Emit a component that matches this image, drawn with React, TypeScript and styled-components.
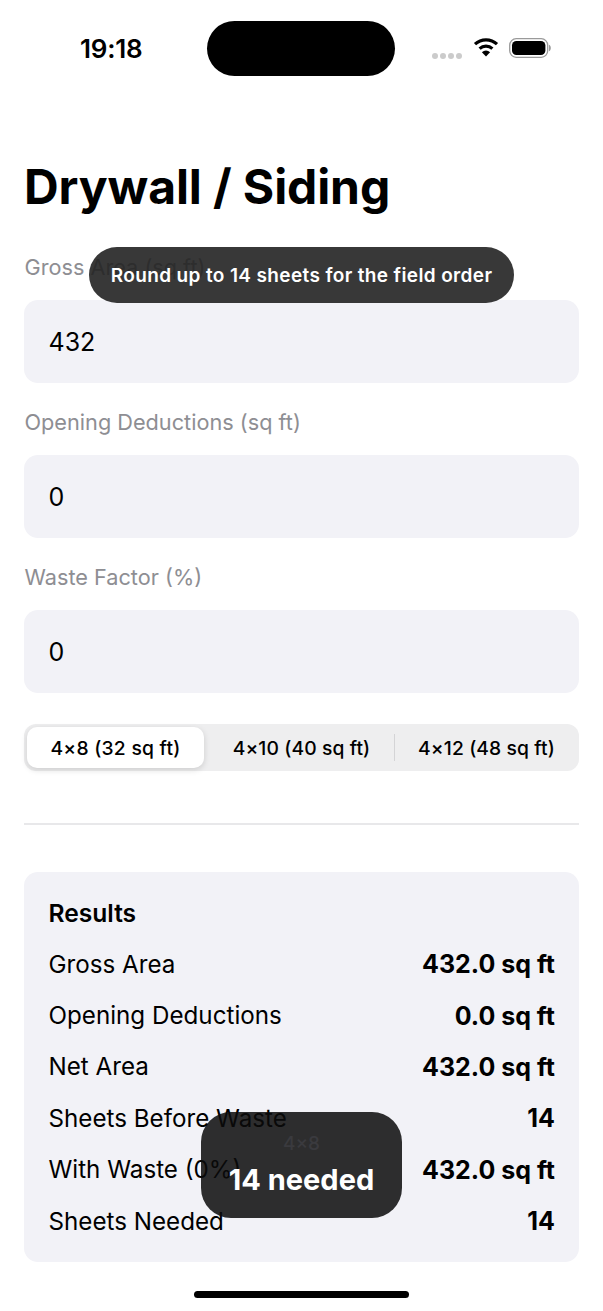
import React from 'react';
import styled, { createGlobalStyle } from 'styled-components';

const GlobalStyle = createGlobalStyle`
  html, body {
    margin: 0;
    padding: 0;
    background: #fff;
  }
`;

const Screen = styled.div`
  position: relative;
  width: 603px;
  height: 1311px;
  overflow: hidden;
  background: #fff;
  color: #000;
  font-family: Inter, "Liberation Sans", sans-serif;
`;

const StatusBar = styled.div`
  display: flex;
  align-items: center;
  height: 55px;
  padding: 21px 0 0 80px;
`;

const Time = styled.div`
  width: 127px;
  font-size: 26px;
  font-weight: 600;
  letter-spacing: -0.2px;
`;

const Island = styled.div`
  width: 188px;
  height: 55px;
  border-radius: 28px;
  background: #000;
`;

const StatusIcons = styled.div`
  display: flex;
  align-items: center;
  margin-left: 37px;
`;

const Dots = styled.div`
  display: flex;
  gap: 2px;
  margin: 14px 11px 0 0;
`;

const Dot = styled.span`
  width: 6px;
  height: 6px;
  border-radius: 50%;
  background: #cbcbcb;
`;

const Content = styled.main`
  padding: 82px 24px 0;
`;

const Title = styled.h1`
  margin: 0 0 35px;
  font-size: 48px;
  line-height: 58px;
  font-weight: 700;
  letter-spacing: -0.1px;
`;

const Field = styled.div`
  margin-bottom: 23px;
`;

const Label = styled.div`
  height: 33px;
  margin-bottom: 16px;
  padding-left: 0.5px;
  font-size: 21.7px;
  line-height: 33px;
  color: #8e8e93;
`;

const InputBox = styled.div`
  display: flex;
  align-items: center;
  height: 83px;
  padding: 0 24.5px;
  border-radius: 14px;
  background: #f2f2f7;
  font-size: 25px;
`;

const Segments = styled.div`
  display: grid;
  grid-template-columns: repeat(3, 185px);
  height: 47px;
  margin-top: 31px;
  border-radius: 12px;
  background: #eeeeef;
`;

const Segment = styled.div<{ $active?: boolean; $divider?: boolean }>`
  position: relative;
  display: flex;
  align-items: center;
  justify-content: center;
  margin: ${(p) => (p.$active ? '3px 5px 3px 3px' : '0')};
  border-radius: 10px;
  font-size: 19.3px;
  font-weight: 500;
  letter-spacing: ${(p) => (p.$active ? '0.25px' : '0.1px')};
  background: ${(p) => (p.$active ? '#fff' : 'transparent')};
  box-shadow: ${(p) => (p.$active ? '0 2px 6px rgba(0, 0, 0, 0.14)' : 'none')};

  ${(p) =>
    p.$divider &&
    `
    &::before {
      content: '';
      position: absolute;
      left: 0;
      top: 10px;
      width: 1px;
      height: 27px;
      background: #d4d4d6;
    }
  `}
`;

const Rule = styled.hr`
  height: 2px;
  margin: 52px 0 47px;
  border: 0;
  background: #e8e8ea;
`;

const ResultsCard = styled.section`
  height: 390px;
  box-sizing: border-box;
  padding: 24px 24px 0 24.5px;
  border-radius: 14px;
  background: #f2f2f7;
`;

const ResultsTitle = styled.h2`
  margin: 0 0 8.5px;
  font-size: 24.6px;
  line-height: 34px;
  font-weight: 600;
`;

const Row = styled.div`
  display: flex;
  align-items: center;
  justify-content: space-between;
  height: 51.4px;
  font-size: 24.2px;
`;

const Value = styled.span`
  font-size: 25px;
  font-weight: 700;
`;

const HomeBar = styled.div`
  position: absolute;
  left: 194px;
  bottom: 13px;
  width: 215px;
  height: 7px;
  border-radius: 4px;
  background: #000;
`;

const Hint = styled.div`
  position: absolute;
  left: 89px;
  top: 247px;
  display: flex;
  align-items: center;
  justify-content: center;
  width: 425px;
  height: 56px;
  border-radius: 28px;
  background: rgba(34, 34, 34, 0.9);
  color: #fff;
  font-size: 19px;
  font-weight: 600;
  letter-spacing: 0.37px;
`;

const Hud = styled.div`
  position: absolute;
  left: 201px;
  top: 1112px;
  display: flex;
  flex-direction: column;
  align-items: center;
  width: 201px;
  height: 106px;
  border-radius: 30px;
  background: rgba(10, 10, 10, 0.85);
`;

const HudSub = styled.div`
  margin-top: 20px;
  font-size: 19px;
  line-height: 23px;
  font-weight: 500;
  color: #3a3a3e;
`;

const HudMain = styled.div`
  margin-top: 7px;
  font-size: 29px;
  line-height: 36px;
  font-weight: 700;
  color: #fff;
`;

const WifiIcon = () => (
  <svg width="26" height="20" viewBox="0 0 26 20" style={{ marginTop: -3 }}>
    <path d="M2 7.2 A16 16 0 0 1 24 7.2" fill="none" stroke="#000" strokeWidth="3.2" />
    <path d="M6.6 11.6 A9.6 9.6 0 0 1 19.4 11.6" fill="none" stroke="#000" strokeWidth="3.2" />
    <path d="M13 19.5 L8.9 15.2 A6 6 0 0 1 17.1 15.2 Z" fill="#000" />
  </svg>
);

const BatteryIcon = () => (
  <svg width="42" height="20" viewBox="0 0 42 20" style={{ marginLeft: 10, marginTop: -1 }}>
    <rect x="0.7" y="0.7" width="38" height="18.6" rx="6.5" fill="none" stroke="#9a9a9a" strokeWidth="1.3" />
    <rect x="3" y="3" width="33.4" height="14" rx="4.5" fill="#000" />
    <path d="M40 6.8 C41.2 7.3 41.8 8.5 41.8 10 C41.8 11.5 41.2 12.7 40 13.2 Z" fill="#9a9a9a" />
  </svg>
);

const fields = [
  { label: 'Gross Area (sq ft)', value: '432' },
  { label: 'Opening Deductions (sq ft)', value: '0' },
  { label: 'Waste Factor (%)', value: '0' },
];

const results = [
  { name: 'Gross Area', value: '432.0 sq ft' },
  { name: 'Opening Deductions', value: '0.0 sq ft' },
  { name: 'Net Area', value: '432.0 sq ft' },
  { name: 'Sheets Before Waste', value: '14' },
  { name: 'With Waste (0%)', value: '432.0 sq ft' },
  { name: 'Sheets Needed', value: '14' },
];

export default function App() {
  return (
    <Screen>
      <GlobalStyle />
      <StatusBar>
        <Time>19:18</Time>
        <Island />
        <StatusIcons>
          <Dots>
            <Dot />
            <Dot />
            <Dot />
            <Dot />
          </Dots>
          <WifiIcon />
          <BatteryIcon />
        </StatusIcons>
      </StatusBar>
      <Content>
        <Title>Drywall / Siding</Title>
        {fields.map((f) => (
          <Field key={f.label}>
            <Label>{f.label}</Label>
            <InputBox>{f.value}</InputBox>
          </Field>
        ))}
        <Segments>
          <Segment $active>4×8 (32 sq ft)</Segment>
          <Segment>4×10 (40 sq ft)</Segment>
          <Segment $divider>4×12 (48 sq ft)</Segment>
        </Segments>
        <Rule />
        <ResultsCard>
          <ResultsTitle>Results</ResultsTitle>
          {results.map((r) => (
            <Row key={r.name}>
              <span>{r.name}</span>
              <Value>{r.value}</Value>
            </Row>
          ))}
        </ResultsCard>
      </Content>
      <Hint>Round up to 14 sheets for the field order</Hint>
      <Hud>
        <HudSub>4×8</HudSub>
        <HudMain>14 needed</HudMain>
      </Hud>
      <HomeBar />
    </Screen>
  );
}
